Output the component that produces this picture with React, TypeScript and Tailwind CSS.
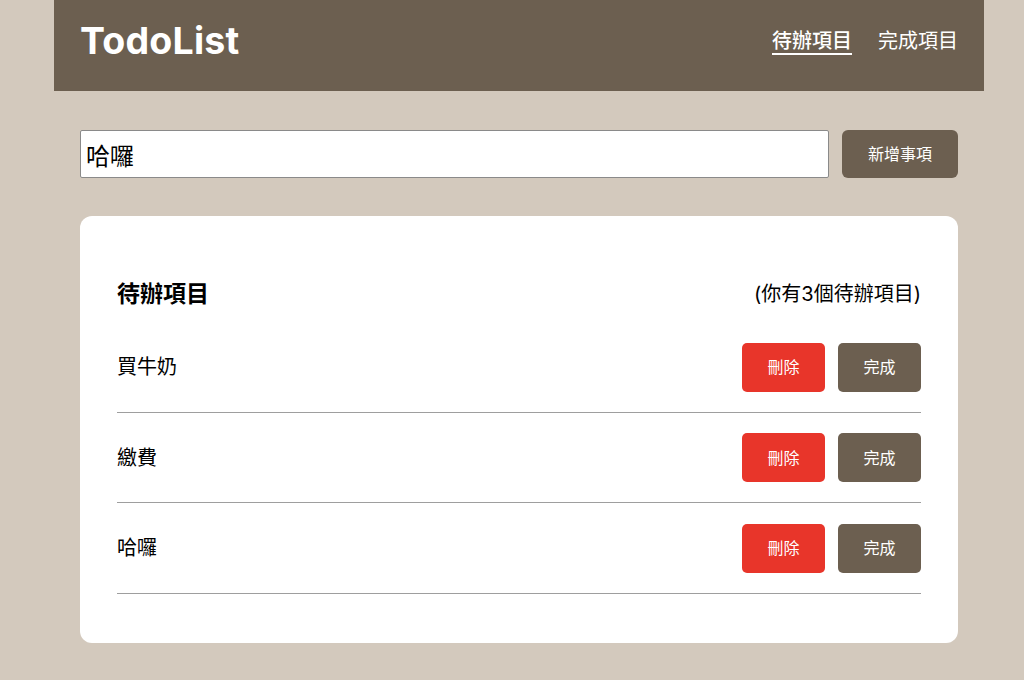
const todos = ["買牛奶", "繳費", "哈囉"];

export default function App() {
  return (
    <div className="min-h-[680px] bg-[#d3c9bd] font-['Inter','Noto_Sans_CJK_TC',sans-serif] text-black">
      <div className="ml-[54px] w-[930px]">
        <header className="flex h-[91px] items-center justify-between bg-[#6c5f50] px-[26px] pb-[9px]">
          <h1 className="text-[37.5px] font-bold text-white tracking-[0.2px]">TodoList</h1>
          <nav className="flex gap-[26px] text-[20px] text-white">
            <a className="underline underline-offset-[5px] decoration-[1.5px] font-medium">待辦項目</a>
            <a>完成項目</a>
          </nav>
        </header>

        <main className="px-[26px] pt-[39px] pb-[38px]">
          <div className="flex gap-[13px]">
            <input
              className="h-[48px] flex-1 rounded-[2px] border border-[#8a8a8a] bg-white px-[5px] text-[24px] outline-none"
              defaultValue="哈囉"
            />
            <button className="h-[48px] w-[116px] rounded-[6px] bg-[#6c5f50] text-[16px] text-white">
              新增事項
            </button>
          </div>

          <section className="mt-[38px] rounded-[12px] bg-white px-[37px] pt-[50px] pb-[49px]">
            <div className="flex h-[56px] items-center justify-between">
              <h2 className="text-[23px] font-bold">待辦項目</h2>
              <span className="text-[20px]">(你有3個待辦項目)</span>
            </div>
            {todos.map((t) => (
              <div
                key={t}
                className="flex items-center justify-between border-b-[1.5px] border-[#9e9e9e] pt-[20.5px] pb-[20px]"
              >
                <span className="text-[20px]">{t}</span>
                <div className="flex gap-[13px]">
                  <button className="h-[49px] w-[83px] rounded-[5px] bg-[#e8352a] text-[16px] text-white">
                    刪除
                  </button>
                  <button className="h-[49px] w-[83px] rounded-[5px] bg-[#6c5f50] text-[16px] text-white">
                    完成
                  </button>
                </div>
              </div>
            ))}
          </section>
        </main>
      </div>
    </div>
  );
}
